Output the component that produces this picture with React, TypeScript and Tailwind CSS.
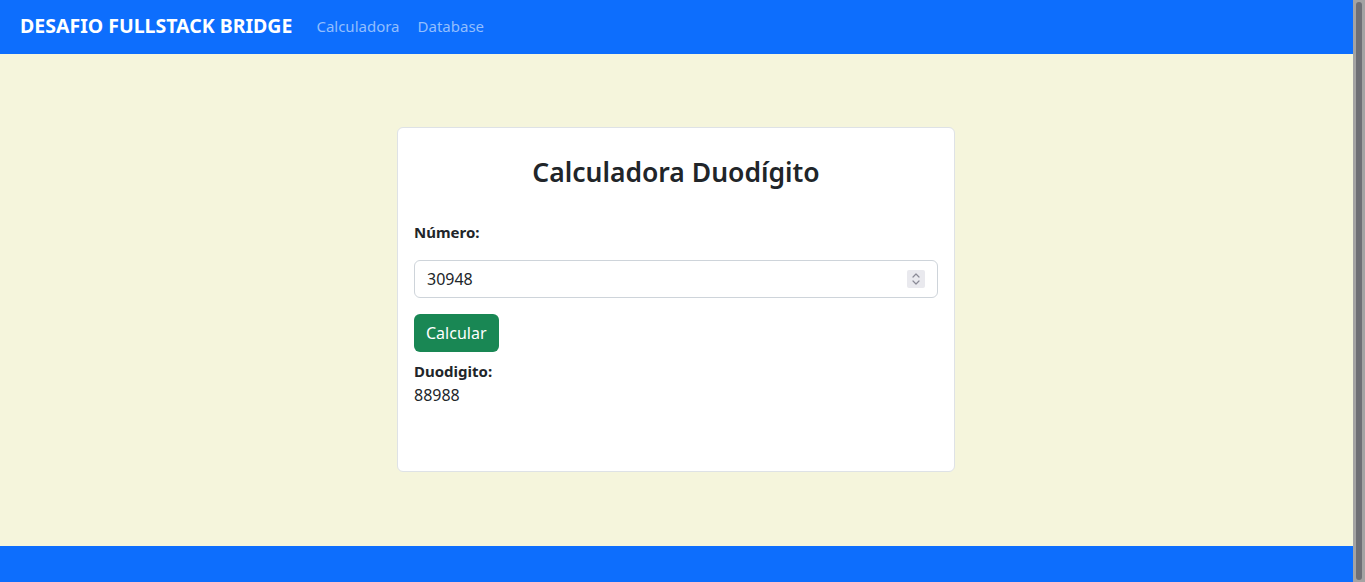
import React from "react";

const font = { fontFamily: '"Noto Sans", "Open Sans", sans-serif' };

function Spinner() {
  return (
    <div className="flex h-[18px] w-[18px] items-center justify-center rounded-[2px] bg-[#e9e9ee]">
      <svg width="10" height="14" viewBox="0 0 10 14" fill="none" stroke="#8a8a96" strokeWidth="1.2" strokeLinecap="round" strokeLinejoin="round">
        <path d="M2 5 L5 2 L8 5" />
        <path d="M2 9 L5 12 L8 9" />
      </svg>
    </div>
  );
}

export default function App() {
  return (
    <div className="flex h-[582px] w-[1365px] overflow-hidden text-[#212529]" style={font}>
      <div className="flex min-w-0 flex-1 flex-col">
        <nav className="flex h-[54px] shrink-0 items-center bg-[#0d6efd] pl-5 pb-[2px]">
          <span className="mr-4 text-[19.5px] font-bold text-white">DESAFIO FULLSTACK BRIDGE</span>
          <a className="px-2 text-[15px] text-[#92befe]">Calculadora</a>
          <a className="px-2 pl-[10px] text-[15px] text-[#92befe]">Database</a>
        </nav>
        <main className="flex flex-1 items-center justify-center bg-[#f5f5dc] pr-px pb-[2px]">
          <div className="flex h-[345px] w-[558px] flex-col rounded-[6px] border border-[#dee2e6] bg-white px-4 pt-[24px]">
            <h2 className="text-center text-[26.5px] font-semibold leading-[40px]">Calculadora Duodígito</h2>
            <label className="mt-[28px] text-[15px] font-bold leading-6">Número:</label>
            <div className="mt-[16px] flex h-[38px] items-center justify-between rounded-[6px] border border-[#ced4da] bg-white pl-3 pr-3">
              <span className="text-[16px]">30948</span>
              <Spinner />
            </div>
            <div className="mt-4">
              <button className="h-[38px] rounded-[6px] bg-[#198754] px-3 text-[16px] text-white">Calcular</button>
            </div>
            <div className="mt-[7px] text-[15px] font-bold leading-6">Duodigito:</div>
            <div className="text-[16px] leading-6">88988</div>
          </div>
        </main>
        <footer className="h-[36px] shrink-0 bg-[#0d6efd]" />
      </div>
      <div className="flex w-[12px] shrink-0 justify-center bg-[#a3a3a3] py-[2px]">
        <div className="w-[6px] rounded-full bg-[#6e6f75]" />
      </div>
    </div>
  );
}
